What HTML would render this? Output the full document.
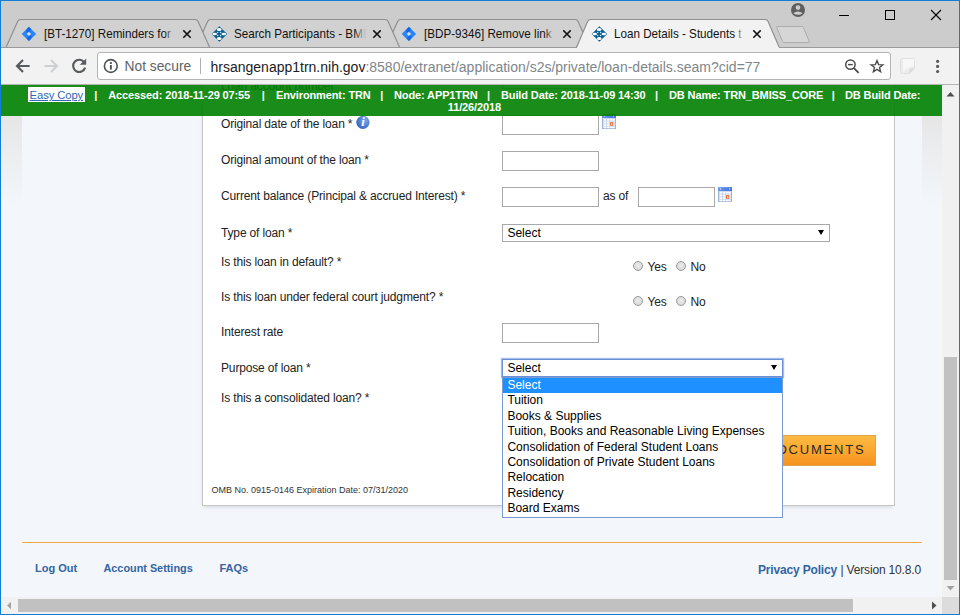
<!DOCTYPE html>
<html>
<head>
<meta charset="utf-8">
<title>Loan Details - Students t</title>
<style>
html,body{margin:0;padding:0;}
body{width:960px;height:615px;overflow:hidden;background:#137dd6;position:relative;font-family:"Liberation Sans",Arial,sans-serif;}
.abs{position:absolute;}
#win{position:absolute;left:1px;top:1px;width:958px;height:613px;background:#cccccc;overflow:hidden;}
/* everything inside #win uses page coordinates minus 1 via wrapper */
#w{position:absolute;left:-1px;top:-1px;width:960px;height:615px;}
#toolbar{left:1px;top:48px;width:958px;height:36px;background:#f2f2f2;border-bottom:1px solid #b4b4b4;}
#omni{left:97px;top:52px;width:792px;height:26px;background:#fff;border:1px solid #b3b3b3;border-radius:3px;}
.tt{position:absolute;top:25px;height:19px;line-height:19px;font-size:12.6px;color:#111;white-space:nowrap;overflow:hidden;transform:scaleX(0.925);transform-origin:0 0;}
.fade{position:absolute;top:0;right:0;width:12px;height:19px;}
.url{position:absolute;top:57px;height:20px;line-height:20px;font-size:14px;white-space:nowrap;}
/* page */
#page{left:1px;top:85px;width:941px;height:512px;background:#f3f7fb;overflow:hidden;}
#pg{position:absolute;left:-1px;top:-85px;width:960px;height:615px;font-size:11.7px;color:#222;}
.lbl{position:absolute;left:221px;height:16px;line-height:16px;white-space:nowrap;font-size:12px;letter-spacing:-0.15px;color:#222;}
.inp{position:absolute;background:#fff;border:1px solid #a9a9a9;box-sizing:border-box;}
.sel{position:absolute;background:#fff;border:1px solid #a9a9a9;box-sizing:border-box;font-size:12px;line-height:15px;color:#000;}
.sel span{position:absolute;left:4.4px;top:1px;}
.sel i{position:absolute;right:5px;top:5.2px;width:0;height:0;border-left:3.1px solid transparent;border-right:3.1px solid transparent;border-top:5.6px solid #000;}
.radio{position:absolute;width:8.4px;height:8.4px;border:1px solid #9a9a9a;border-radius:50%;background:radial-gradient(circle at 50% 45%,#ececec,#d2d2d2);}
.rl{position:absolute;letter-spacing:-0.2px;font-size:12px;height:16px;line-height:16px;color:#222;}
#banner{left:1px;top:85px;width:941px;height:31px;background:rgba(0,128,0,0.9);}
.bt{position:absolute;top:89px;height:12px;line-height:12px;font-size:11px;letter-spacing:-0.12px;font-weight:bold;color:#fff;white-space:nowrap;}
#dd{left:502px;top:377px;width:281px;height:141px;box-sizing:border-box;border:1px solid #7a9bd6;background:#fff;font-size:12px;color:#000;}
#dd div{height:15.4px;line-height:15.4px;padding-left:4.4px;white-space:nowrap;}
#dd div.hi{background:#1e90ff;color:#fff;}
.fl{position:absolute;font-weight:bold;color:#3464a2;white-space:nowrap;height:14px;line-height:14px;}
</style>
</head>
<body>
<div id="win"><div id="w">

<!-- ===== TAB STRIP ===== -->
<svg class="abs" style="left:0;top:0" width="960" height="49" viewBox="0 0 960 49">
  <!-- inactive tabs (drawn back to front: 3,2,1) -->
  <g fill="#d1d1d1" stroke="#8e8e8e" stroke-width="1.15">
    <path d="M386 47.5 L397.6 21.5 Q398.5 19.5 400.5 19.5 L575.2 19.5 Q577.2 19.5 578.1 21.5 L589.7 47.5"/>
    <path d="M196 47.5 L207.6 21.5 Q208.5 19.5 210.5 19.5 L385.2 19.5 Q387.2 19.5 388.1 21.5 L399.7 47.5"/>
    <path d="M6 47.5 L17.6 21.5 Q18.5 19.5 20.5 19.5 L195.2 19.5 Q197.2 19.5 198.1 21.5 L209.7 47.5"/>
  </g>
  <!-- strip bottom line -->
  <rect x="1" y="47" width="958" height="1" fill="#9a9a9a"/>
  <!-- active tab -->
  <path d="M576 48.5 L587.6 21.5 Q588.5 19.5 590.5 19.5 L765.2 19.5 Q767.2 19.5 768.1 21.5 L779.7 48.5" fill="#f2f2f2" stroke="#8e8e8e" stroke-width="1.15"/>
  <rect x="577" y="47" width="202" height="2" fill="#f2f2f2"/>
  <!-- new tab button -->
  <path d="M776.5 27 Q776.2 26.5 777 26.5 L802 26.5 Q803 26.5 803.4 27.4 L809.2 41.4 Q809.6 42.5 808.6 42.5 L784 42.5 Q783 42.5 782.6 41.6 Z" fill="#d6d6d6" stroke="#adadad" stroke-width="1"/>
  <!-- profile icon -->
  <circle cx="798" cy="10" r="7" fill="#5f5f5f"/>
  <circle cx="798" cy="7.6" r="2.3" fill="#cdcdcd"/>
  <path d="M793.3 13.2 Q798 9.6 802.7 13.2 Q798 16.4 793.3 13.2 Z" fill="#cdcdcd"/>
  <!-- window controls -->
  <rect x="839" y="15" width="10" height="1" fill="#000"/>
  <rect x="885.5" y="10.5" width="9" height="9" fill="none" stroke="#000" stroke-width="1"/>
  <path d="M931 10 L941 20 M941 10 L931 20" stroke="#000" stroke-width="1.1" fill="none"/>
  <!-- tab close X -->
  <g stroke="#111" stroke-width="1.5" fill="none">
    <path d="M183.3 30.4 L190.7 37.8 M190.7 30.4 L183.3 37.8"/>
    <path d="M373.3 30.4 L380.7 37.8 M380.7 30.4 L373.3 37.8"/>
    <path d="M563.3 30.4 L570.7 37.8 M570.7 30.4 L563.3 37.8"/>
    <path d="M753.3 30.4 L760.7 37.8 M760.7 30.4 L753.3 37.8"/>
  </g>
  <!-- favicons: jira -->
  <g id="jr">
    <path d="M28.9 26.7 L36.1 33.9 L28.9 41.1 L21.7 33.9 Z" fill="#2684ff"/>
    <path d="M28.9 26.7 L31.2 29 Q28.4 31.4 28.9 33.9 L26.4 31.4 Q25.6 29.6 28.9 26.7 Z" fill="#0f5fe0" opacity="0.75"/>
    <path d="M28.9 41.1 L26.6 38.8 Q29.4 36.4 28.9 33.9 L31.4 36.4 Q32.2 38.2 28.9 41.1 Z" fill="#0f5fe0" opacity="0.75"/>
    <path d="M28.9 31.7 L31.1 33.9 L28.9 36.1 L26.7 33.9 Z" fill="#dcdcdc"/>
  </g>
  <use href="#jr" x="380"/>
  <!-- favicons: hrsa-like diamond -->
  <g id="fv">
    <path d="M219.4 26.2 L227.1 34 L219.4 41.8 L211.7 34 Z" fill="#0b5f92"/>
    <ellipse cx="219.2" cy="29.5" rx="2.4" ry="1.6" fill="#fff"/>
    <ellipse cx="219.2" cy="38.5" rx="2.4" ry="1.6" fill="#fff"/>
    <ellipse cx="214.7" cy="34" rx="2.3" ry="1.2" fill="#fff"/>
    <ellipse cx="223.8" cy="34" rx="2.3" ry="1.2" fill="#fff"/>
    <circle cx="217.7" cy="32.4" r="0.7" fill="#e6eff6"/>
    <circle cx="220.6" cy="32.4" r="0.7" fill="#e6eff6"/>
    <circle cx="217.7" cy="35.5" r="0.7" fill="#e6eff6"/>
    <circle cx="220.6" cy="35.5" r="0.7" fill="#e6eff6"/>
  </g>
  <use href="#fv" x="380"/>
</svg>

<div class="tt" style="left:43.5px;width:141.5px;">[BT-1270] Reminders for<div class="fade" style="background:linear-gradient(90deg,rgba(209,209,209,0),#d1d1d1 100%)"></div></div>
<div class="tt" style="left:233.5px;width:141.5px;">Search Participants - BMI<div class="fade" style="background:linear-gradient(90deg,rgba(209,209,209,0),#d1d1d1 100%)"></div></div>
<div class="tt" style="left:423.5px;width:141.5px;">[BDP-9346] Remove link<div class="fade" style="background:linear-gradient(90deg,rgba(209,209,209,0),#d1d1d1 100%)"></div></div>
<div class="tt" style="left:613.5px;width:141.5px;">Loan Details - Students t<div class="fade" style="background:linear-gradient(90deg,rgba(242,242,242,0),#f2f2f2 100%)"></div></div>

<!-- ===== TOOLBAR ===== -->
<div id="toolbar" class="abs"></div>
<div id="omni" class="abs"></div>
<svg class="abs" style="left:0;top:48px" width="960" height="36" viewBox="0 48 960 36">
  <!-- back -->
  <path d="M29.6 66 L17.4 66 M23 60 L17 66 L23 72" stroke="#575b60" stroke-width="2.15" fill="none"/>
  <!-- forward (disabled) -->
  <path d="M44.4 66 L56.6 66 M51 60 L57 66 L51 72" stroke="#cdd0d3" stroke-width="2.15" fill="none"/>
  <!-- reload -->
  <path d="M84.2 62.3 A6.1 6.1 0 1 0 85.1 67.6" stroke="#575b60" stroke-width="2.15" fill="none"/>
  <path d="M86.2 58.4 L86.2 64.8 L79.8 64.8 Z" fill="#575b60"/>
  <!-- info icon -->
  <circle cx="110.8" cy="66" r="6.4" stroke="#4e5256" stroke-width="1.6" fill="none"/>
  <rect x="109.9" y="65" width="1.9" height="4.6" fill="#4e5256"/>
  <rect x="109.9" y="62.1" width="1.9" height="1.9" fill="#4e5256"/>
  <!-- separator -->
  <rect x="200" y="58" width="1" height="16" fill="#b0b0b0"/>
  <!-- zoom-out magnifier -->
  <circle cx="850.4" cy="64.6" r="4.7" stroke="#4a4a4a" stroke-width="1.5" fill="none"/>
  <path d="M854 68.2 L858.6 72.8" stroke="#4a4a4a" stroke-width="1.8" fill="none"/>
  <rect x="848" y="63.9" width="4.8" height="1.4" fill="#4a4a4a"/>
  <!-- star -->
  <path d="M877.0 60.5 L878.6 64.6 L882.9 64.8 L879.5 67.5 L880.6 71.7 L877.0 69.4 L873.4 71.7 L874.5 67.5 L871.1 64.8 L875.4 64.6 Z" stroke="#4a4a4a" stroke-width="1.35" fill="none" stroke-linejoin="miter"/>
  <!-- extension icon (faint note) -->
  <path d="M902.5 58.5 L912.5 58.5 Q914.5 58.5 914.5 60.5 L914.5 68.5 L909.5 73.5 L902.5 73.5 Q900.5 73.5 900.5 71.5 L900.5 60.5 Q900.5 58.5 902.5 58.5 Z" fill="#ececec" stroke="#e0e0e0" stroke-width="1"/>
  <path d="M903 59 L914 59 L914 66 Q908 67 903 72 Z" fill="#f7f7f7"/>
  <path d="M914.5 68.5 L909.5 68.5 L909.5 73.5 Z" fill="#dcdcdc"/>
  <!-- menu dots -->
  <circle cx="937.6" cy="61.3" r="1.6" fill="#5a5a5a"/>
  <circle cx="937.6" cy="66.4" r="1.6" fill="#5a5a5a"/>
  <circle cx="937.6" cy="71.5" r="1.6" fill="#5a5a5a"/>
</svg>
<div class="url" style="left:124.5px;color:#5f6368;font-size:13.8px;">Not secure</div>
<div class="url" style="left:210.5px;color:#202124;">hrsangenapp1trn.nih.gov<span style="color:#80868b">:8580/extranet/application/s2s/private/loan-details.seam?cid=77</span></div>

<!-- ===== PAGE ===== -->
<div id="page" class="abs"><div id="pg">
  <!-- side shadows -->
  <div class="abs" style="left:1px;top:116px;width:21px;height:90px;background:linear-gradient(180deg,#e6e6e6,rgba(243,247,251,0))"></div>
  <div class="abs" style="left:922px;top:116px;width:20px;height:90px;background:linear-gradient(180deg,#e6e6e6,rgba(243,247,251,0))"></div>
  <!-- white panel -->
  <div class="abs" style="left:202px;top:60px;width:693px;height:446px;box-sizing:border-box;background:#fff;border:1px solid #c6c6c6;box-shadow:-1px 3px 4px -2px rgba(0,0,0,0.13);"></div>

  <div class="lbl" style="top:77.5px;">Loan account number *</div>
  <div class="inp" style="left:502px;top:69px;width:97px;height:20px;"></div>
  <div class="lbl" style="top:115.5px;">Original date of the loan *</div>
  <div class="lbl" style="top:151.5px;">Original amount of the loan *</div>
  <div class="lbl" style="top:187.5px;">Current balance (Principal &amp; accrued Interest) *</div>
  <div class="lbl" style="top:224.5px;">Type of loan *</div>
  <div class="lbl" style="top:253.5px;">Is this loan in default? *</div>
  <div class="lbl" style="top:288.5px;">Is this loan under federal court judgment? *</div>
  <div class="lbl" style="top:323.5px;">Interest rate</div>
  <div class="lbl" style="top:359.5px;">Purpose of loan *</div>
  <div class="lbl" style="top:389.5px;">Is this a consolidated loan? *</div>

  <!-- info icon -->
  <svg class="abs" style="left:355px;top:114px" width="16" height="16" viewBox="0 0 16 16">
    <defs><radialGradient id="ig" cx="65%" cy="35%" r="80%"><stop offset="0" stop-color="#7ea6e6"/><stop offset="1" stop-color="#2a5cc0"/></radialGradient></defs>
    <circle cx="7.9" cy="8.3" r="6.6" fill="url(#ig)"/>
    <text x="8" y="12.3" text-anchor="middle" font-family="Liberation Serif,serif" font-style="italic" font-weight="bold" font-size="12.5" fill="#fff">i</text>
  </svg>

  <!-- inputs -->
  <div class="inp" style="left:502px;top:115px;width:97px;height:20px;"></div>
  <div class="inp" style="left:502px;top:151px;width:97px;height:20px;"></div>
  <div class="inp" style="left:502px;top:187px;width:97px;height:20px;"></div>
  <div class="inp" style="left:638px;top:187px;width:77px;height:20px;"></div>
  <div class="inp" style="left:502px;top:323px;width:97px;height:20px;"></div>
  <div class="rl" style="left:603px;top:188px;">as of</div>

  <!-- calendar icons -->
  <svg class="abs" style="left:602px;top:114px" width="14" height="15" viewBox="0 0 14 15">
    <defs><linearGradient id="cg1" x1="0" y1="0" x2="1" y2="1"><stop offset="0" stop-color="#7fa9f2"/><stop offset="1" stop-color="#2f66dc"/></linearGradient></defs>
    <rect x="0" y="0" width="14" height="15" fill="#8aa6cf"/>
    <rect x="0.7" y="3.6" width="12.6" height="10.8" fill="#ccd6ea"/>
    <rect x="0" y="0" width="14" height="3.8" fill="url(#cg1)"/>
    <path d="M1.6 1.9 L3 1 V2.8 Z M12.4 1.9 L11 1 V2.8 Z" fill="#e8f0ff"/>
    <rect x="1.7" y="4.9" width="2.3" height="1.7" fill="#fff"/><rect x="5.0" y="4.9" width="2.3" height="1.7" fill="#fff"/><rect x="8.2" y="4.9" width="2.3" height="1.7" fill="#fff"/><rect x="11.0" y="4.9" width="1.6" height="1.7" fill="#fff"/><rect x="1.7" y="7.6" width="2.3" height="1.7" fill="#fff"/><rect x="5.0" y="7.6" width="2.3" height="1.7" fill="#fff"/><rect x="8.2" y="7.6" width="2.3" height="1.7" fill="#fff"/><rect x="11.0" y="7.6" width="1.6" height="1.7" fill="#fff"/><rect x="1.7" y="10.3" width="2.3" height="1.7" fill="#fff"/><rect x="5.0" y="10.3" width="2.3" height="1.7" fill="#fff"/><rect x="8.2" y="10.3" width="2.3" height="1.7" fill="#fff"/><rect x="11.0" y="10.3" width="1.6" height="1.7" fill="#fff"/><rect x="1.7" y="12.7" width="2.3" height="1.5" fill="#fff"/><rect x="5.0" y="12.7" width="2.3" height="1.5" fill="#fff"/><rect x="8.2" y="12.7" width="2.3" height="1.5" fill="#fff"/><rect x="11.0" y="12.7" width="1.6" height="1.5" fill="#fff"/>
    <rect x="8" y="8.1" width="3.3" height="3.7" fill="#e9733f"/>
    <rect x="9.3" y="9" width="0.9" height="2" fill="#fbe3d6"/>
  </svg>
  <svg class="abs" style="left:718px;top:187px" width="14" height="15" viewBox="0 0 14 15">
    <defs><linearGradient id="cg2" x1="0" y1="0" x2="1" y2="1"><stop offset="0" stop-color="#7fa9f2"/><stop offset="1" stop-color="#2f66dc"/></linearGradient></defs>
    <rect x="0" y="0" width="14" height="15" fill="#8aa6cf"/>
    <rect x="0.7" y="3.6" width="12.6" height="10.8" fill="#ccd6ea"/>
    <rect x="0" y="0" width="14" height="3.8" fill="url(#cg2)"/>
    <path d="M1.6 1.9 L3 1 V2.8 Z M12.4 1.9 L11 1 V2.8 Z" fill="#e8f0ff"/>
    <rect x="1.7" y="4.9" width="2.3" height="1.7" fill="#fff"/><rect x="5.0" y="4.9" width="2.3" height="1.7" fill="#fff"/><rect x="8.2" y="4.9" width="2.3" height="1.7" fill="#fff"/><rect x="11.0" y="4.9" width="1.6" height="1.7" fill="#fff"/><rect x="1.7" y="7.6" width="2.3" height="1.7" fill="#fff"/><rect x="5.0" y="7.6" width="2.3" height="1.7" fill="#fff"/><rect x="8.2" y="7.6" width="2.3" height="1.7" fill="#fff"/><rect x="11.0" y="7.6" width="1.6" height="1.7" fill="#fff"/><rect x="1.7" y="10.3" width="2.3" height="1.7" fill="#fff"/><rect x="5.0" y="10.3" width="2.3" height="1.7" fill="#fff"/><rect x="8.2" y="10.3" width="2.3" height="1.7" fill="#fff"/><rect x="11.0" y="10.3" width="1.6" height="1.7" fill="#fff"/><rect x="1.7" y="12.7" width="2.3" height="1.5" fill="#fff"/><rect x="5.0" y="12.7" width="2.3" height="1.5" fill="#fff"/><rect x="8.2" y="12.7" width="2.3" height="1.5" fill="#fff"/><rect x="11.0" y="12.7" width="1.6" height="1.5" fill="#fff"/>
    <rect x="8" y="8.1" width="3.3" height="3.7" fill="#e9733f"/>
    <rect x="9.3" y="9" width="0.9" height="2" fill="#fbe3d6"/>
  </svg>

  <!-- selects -->
  <div class="sel" style="left:502px;top:224px;width:328px;height:18px;"><span>Select</span><i></i></div>
  <div class="sel" style="left:502px;top:359px;width:281px;height:18px;border-color:#6a8fd6;box-shadow:0 0 1px 1px rgba(100,145,225,0.6);"><span>Select</span><i></i></div>

  <!-- radios -->
  <div class="radio" style="left:632.5px;top:260.5px;"></div><div class="rl" style="left:647.5px;top:259px;">Yes</div>
  <div class="radio" style="left:675.5px;top:260.5px;"></div><div class="rl" style="left:690.5px;top:259px;">No</div>
  <div class="radio" style="left:632.5px;top:295.5px;"></div><div class="rl" style="left:647.5px;top:294px;">Yes</div>
  <div class="radio" style="left:675.5px;top:295.5px;"></div><div class="rl" style="left:690.5px;top:294px;">No</div>

  <!-- orange button -->
  <div class="abs" style="left:640px;top:435px;width:236px;height:31px;box-sizing:border-box;border:1px solid #dea24e;background:linear-gradient(180deg,#fdbb42,#f7931f);"></div>
  <div class="abs" style="left:640px;top:442px;width:225.5px;text-align:right;font-weight:normal;font-size:13px;letter-spacing:1.8px;color:#2a2a2a;height:16px;line-height:16px;white-space:nowrap;">UPLOAD DOCUMENTS</div>

  <!-- dropdown list -->
  <div id="dd" class="abs">
    <div class="hi">Select</div>
    <div>Tuition</div>
    <div>Books &amp; Supplies</div>
    <div>Tuition, Books and Reasonable Living Expenses</div>
    <div>Consolidation of Federal Student Loans</div>
    <div>Consolidation of Private Student Loans</div>
    <div>Relocation</div>
    <div>Residency</div>
    <div>Board Exams</div>
  </div>

  <div class="abs" style="left:211.5px;top:484px;font-size:9px;height:12px;line-height:12px;color:#333;white-space:nowrap;">OMB No. 0915-0146 Expiration Date: 07/31/2020</div>

  <!-- footer -->
  <div class="abs" style="left:22px;top:542px;width:900px;height:1px;background:#f0a93a;"></div>
  <div class="fl" style="left:35px;top:561px;font-size:11px;">Log Out</div>
  <div class="fl" style="left:103.5px;top:561px;font-size:10.85px;">Account Settings</div>
  <div class="fl" style="left:219.5px;top:561px;font-size:11px;">FAQs</div>
  <div class="fl" style="left:758px;top:563px;font-size:12px;letter-spacing:-0.17px;">Privacy Policy</div>
  <div class="abs" style="left:840.5px;top:563px;font-size:12px;letter-spacing:-0.17px;height:14px;line-height:14px;color:#333;white-space:nowrap;">| Version 10.8.0</div>

  <!-- green banner -->
  <div id="banner" class="abs"></div>
  <div class="bt" style="left:28px;top:87px;width:55.4px;padding-left:1.6px;height:15px;line-height:17px;overflow:hidden;background:#fff;color:#2f68b4;font-weight:normal;font-size:11.3px;text-decoration:underline;">Easy Copy</div>
  <div class="bt" style="left:94.2px;">|</div>
  <div class="bt" style="left:108.3px;">Accessed: 2018-11-29 07:55</div>
  <div class="bt" style="left:261.8px;">|</div>
  <div class="bt" style="left:276px;">Environment: TRN</div>
  <div class="bt" style="left:380.3px;">|</div>
  <div class="bt" style="left:394px;">Node: APP1TRN</div>
  <div class="bt" style="left:487px;">|</div>
  <div class="bt" style="left:501px;">Build Date: 2018-11-09 14:30</div>
  <div class="bt" style="left:655px;">|</div>
  <div class="bt" style="left:669px;">DB Name: TRN_BMISS_CORE</div>
  <div class="bt" style="left:831.7px;">|</div>
  <div class="bt" style="left:845px;">DB Build Date:</div>
  <div class="bt" style="left:447.8px;top:101px;">11/26/2018</div>
</div></div>

<!-- ===== SCROLLBARS ===== -->
<div class="abs" style="left:942px;top:85px;width:17px;height:512px;background:#f1f1f1;"></div>
<div class="abs" style="left:944px;top:357px;width:13px;height:223px;background:#c1c1c1;"></div>
<div class="abs" style="left:1px;top:597px;width:941px;height:17px;background:#f1f1f1;"></div>
<div class="abs" style="left:18px;top:599px;width:835px;height:13px;background:#c1c1c1;"></div>
<div class="abs" style="left:942px;top:597px;width:17px;height:17px;background:#dcdcdc;"></div>
<svg class="abs" style="left:0;top:0;pointer-events:none" width="960" height="615" viewBox="0 0 960 615">
  <path d="M946.5 96.5 L950.5 92 L954.5 96.5 Z" fill="#505050"/>
  <path d="M946.5 586 L950.5 590.5 L954.5 586 Z" fill="#a3a3a3"/>
  <path d="M11 601.8 L7 605.5 L11 609.2 Z" fill="#a3a3a3"/>
  <path d="M932 601.5 L936.5 605.5 L932 609.5 Z" fill="#505050"/>
</svg>

</div></div>
</body>
</html>
